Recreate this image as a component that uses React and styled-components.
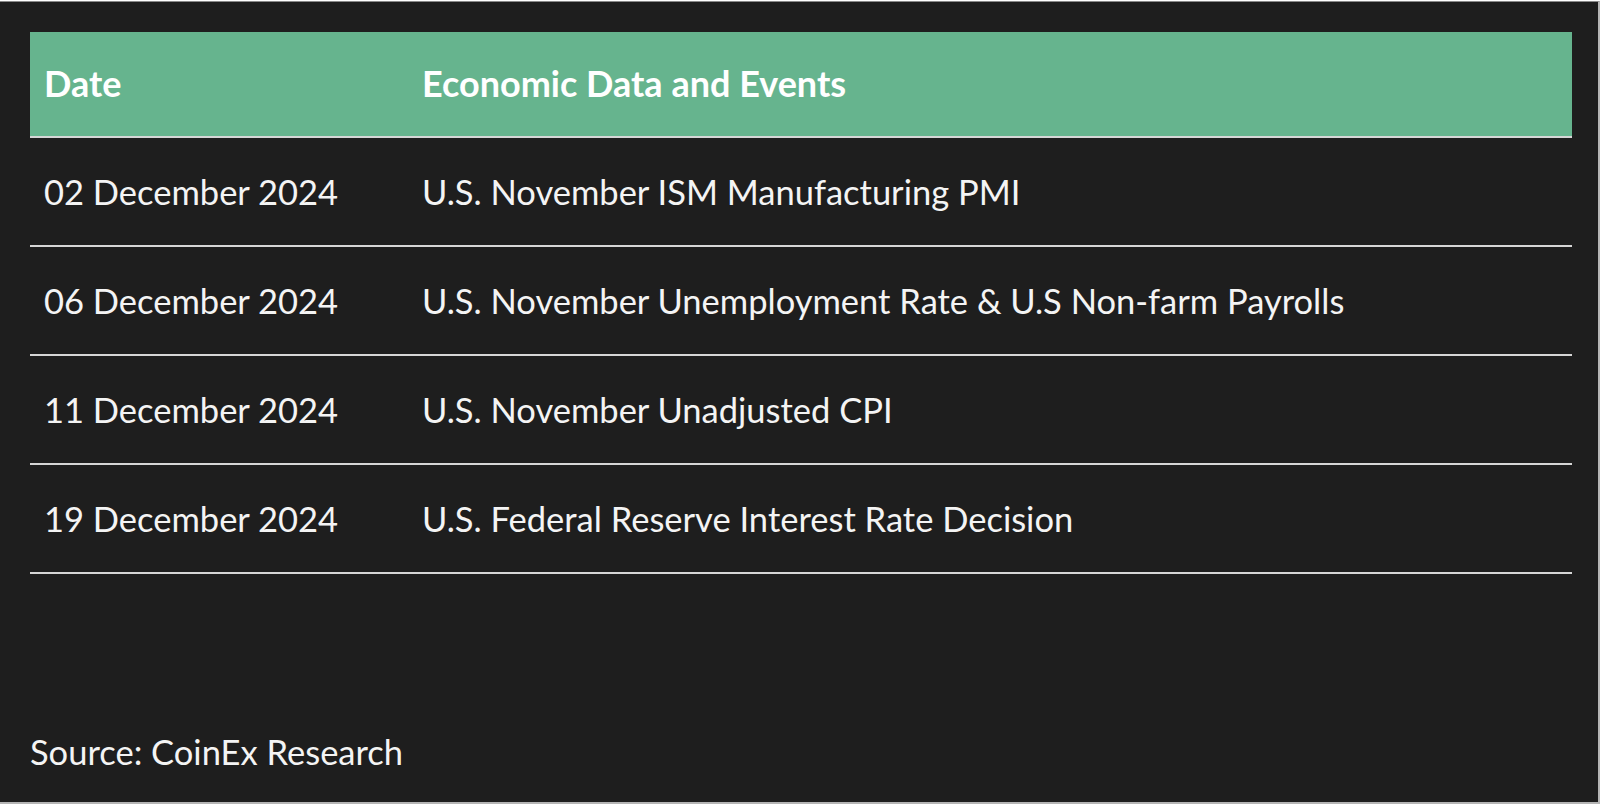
import React from "react";
import styled, { createGlobalStyle } from "styled-components";

const GlobalStyle = createGlobalStyle`
  *, *::before, *::after {
    box-sizing: border-box;
  }
  body {
    margin: 0;
    background: #ffffff;
    font-family: Lato, "Liberation Sans", sans-serif;
  }
`;

const Panel = styled.section`
  width: 1600px;
  height: 803px;
  margin-top: 1px;
  background-color: #1e1e1e;
  border-top: 1px solid #8a8a8a;
  border-right: 2px solid #b5b5b5;
  border-bottom: 2px solid #b5b5b5;
  padding: 30px 26px 0 30px;
  display: flex;
  flex-direction: column;
`;

const Table = styled.table`
  width: 100%;
  border-collapse: separate;
  border-spacing: 0;
  color: #f4f4f4;
  font-size: 34.5px;
`;

const HeadCell = styled.th`
  background-color: #66b48e;
  color: #ffffff;
  font-size: 36px;
  font-weight: 700;
  text-align: left;
  height: 106px;
  padding: 0 14px 3px;
  border-bottom: 2px solid #d6d6d6;
  width: ${({ $width }) => $width || "auto"};
`;

const Cell = styled.td`
  height: 109px;
  padding: 0 14px;
  border-bottom: 2px solid #d6d6d6;
  font-weight: 400;
  white-space: nowrap;
`;

const Source = styled.p`
  margin: 0;
  padding-top: 157px;
  color: #f4f4f4;
  font-size: 34.5px;
  line-height: 1.2;
`;

const events = [
  { date: "02 December 2024", event: "U.S. November ISM Manufacturing PMI" },
  {
    date: "06 December 2024",
    event: "U.S. November Unemployment Rate & U.S Non-farm Payrolls",
  },
  { date: "11 December 2024", event: "U.S. November Unadjusted CPI" },
  {
    date: "19 December 2024",
    event: "U.S. Federal Reserve Interest Rate Decision",
  },
];

function App() {
  return (
    <>
      <GlobalStyle />
      <Panel>
        <Table>
          <thead>
            <tr>
              <HeadCell $width="378px">Date</HeadCell>
              <HeadCell>Economic Data and Events</HeadCell>
            </tr>
          </thead>
          <tbody>
            {events.map((row) => (
              <tr key={row.date}>
                <Cell>{row.date}</Cell>
                <Cell>{row.event}</Cell>
              </tr>
            ))}
          </tbody>
        </Table>
        <Source>Source: CoinEx Research</Source>
      </Panel>
    </>
  );
}

export default App;
